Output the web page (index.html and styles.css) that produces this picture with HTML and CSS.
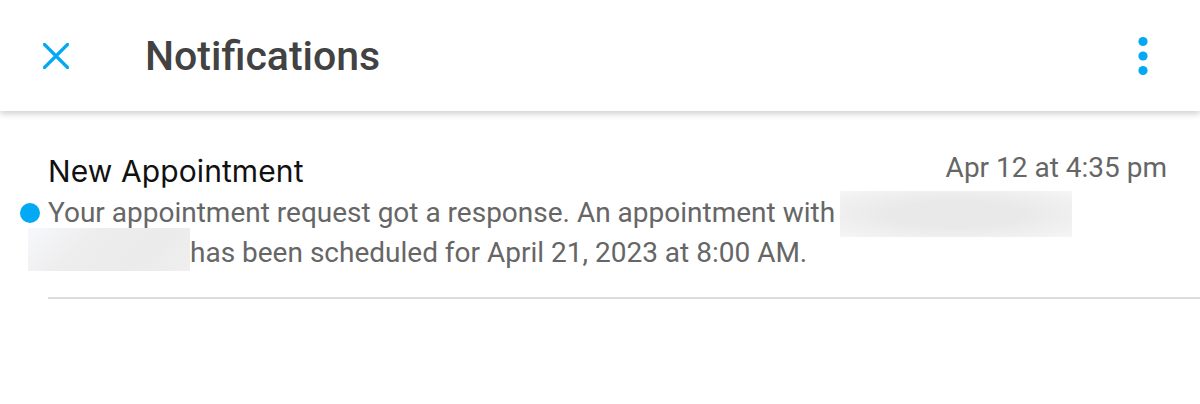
FILE: index.html
```html
<!DOCTYPE html>
<html lang="en">
<head>
<meta charset="utf-8">
<title>Notifications</title>
<link rel="stylesheet" href="styles.css">
</head>
<body>
<header class="topbar">
  <button class="icon-btn close-btn" aria-label="Close">
    <svg width="26" height="26" viewBox="0 0 26 26"><path d="M1.5 1.5 L24.5 24.5 M24.5 1.5 L1.5 24.5" stroke="#03a9f4" stroke-width="3.2" stroke-linecap="round" fill="none"/></svg>
  </button>
  <h1 class="topbar-title">Notifications</h1>
  <button class="icon-btn more-btn" aria-label="More">
    <svg width="10" height="40" viewBox="0 0 10 40"><circle cx="5" cy="5.5" r="4.6" fill="#03a9f4"/><circle cx="5" cy="20" r="4.6" fill="#03a9f4"/><circle cx="5" cy="34.5" r="4.6" fill="#03a9f4"/></svg>
  </button>
</header>
<main class="list">
  <article class="item">
    <div class="item-head">
      <h2 class="item-title">New Appointment</h2>
      <span class="item-date">Apr 12 at 4:35 pm</span>
    </div>
    <p class="item-body"><span class="unread-dot"></span>Your appointment request got a response. An appointment with <span class="redact redact-a"></span><br><span class="redact redact-b"></span>has been scheduled for April 21, 2023 at 8:00 AM.</p>
  </article>
</main>
</body>
</html>
```
FILE: styles.css
```css
html, body {
  margin: 0;
  padding: 0;
  background: #fff;
}
body {
  font-family: Roboto, "Liberation Sans", sans-serif;
  width: 1200px;
  height: 404px;
  overflow: hidden;
}
.topbar {
  height: 111px;
  display: flex;
  align-items: center;
  padding: 0 52px 0 43px;
  box-shadow: 0 3px 6px rgba(0,0,0,0.18);
  position: relative;
  z-index: 1;
}
.icon-btn {
  border: 0;
  background: none;
  padding: 0;
  display: flex;
  align-items: center;
  justify-content: center;
}
.close-btn {
  width: 26px;
  height: 26px;
}
.topbar-title {
  margin: 0 0 0 76px;
  font-size: 41px;
  font-weight: 500;
  color: #424242;
  flex: 1;
  line-height: 48px;
}
.more-btn {
  width: 10px;
  height: 40px;
}
.list {
  padding-left: 48px;
}
.item {
  border-bottom: 2px solid #dcdcdc;
  padding: 40px 33px 24px 0;
}
.item-head {
  display: flex;
  justify-content: space-between;
  align-items: flex-start;
  height: 42px;
}
.item-title {
  margin: 0;
  font-family: Inter, Roboto, sans-serif;
  font-size: 30px;
  font-weight: 400;
  color: #111;
  line-height: 40px;
  letter-spacing: 0.1px;
}
.item-date {
  font-size: 28px;
  color: #666;
  line-height: 34px;
}
.item-body {
  margin: 0;
  font-size: 28px;
  line-height: 40px;
  color: #666;
  position: relative;
}
.unread-dot {
  position: absolute;
  left: -28px;
  top: 10px;
  width: 20px;
  height: 20px;
  border-radius: 50%;
  background: #03a9f4;
}
.redact {
  display: inline-block;
  vertical-align: top;
  background: radial-gradient(ellipse at 50% 50%, #e9e9e9 40%, #f1f1f1 80%, #f6f6f6 100%);
}
.redact-a {
  width: 232px;
  height: 46px;
  margin: -2px 0 -4px -2px;
}
.redact-b {
  width: 162px;
  height: 43px;
  margin: -5px 0 -2px -20px;
  background: linear-gradient(135deg, #f7f8fc 0%, #ededed 35%, #ebebeb 70%, #efefef 100%);
}
```
